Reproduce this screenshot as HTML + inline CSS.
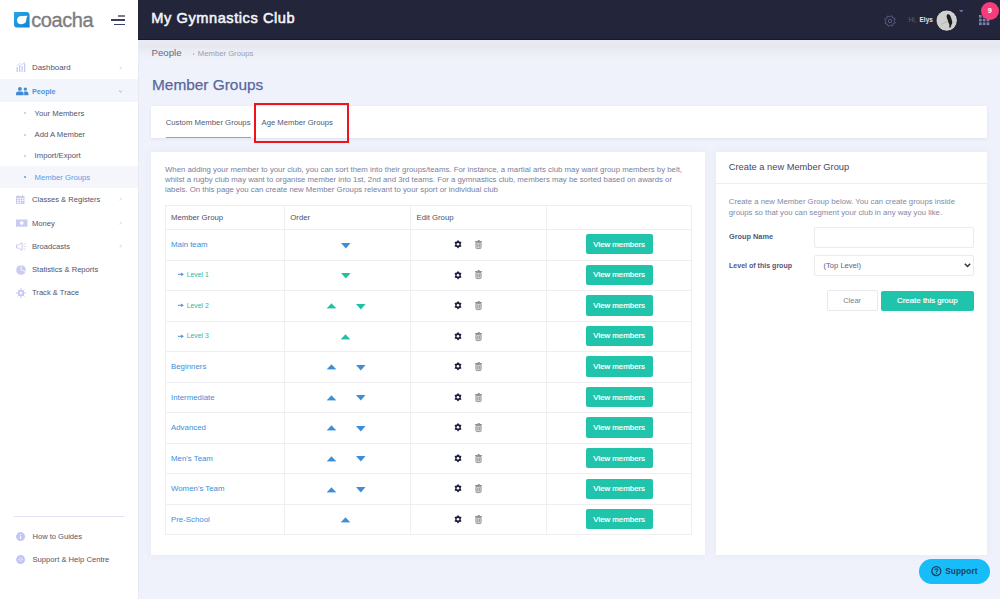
<!DOCTYPE html><html><head><meta charset="utf-8"><style>
*{margin:0;padding:0;box-sizing:border-box}
html,body{width:1000px;height:599px;overflow:hidden;background:#eff2fb;font-family:"Liberation Sans",sans-serif}
.t{position:absolute;white-space:nowrap;line-height:1}
.r{position:absolute}
svg{position:absolute;overflow:visible}
</style></head><body>
<div class="r" style="left:0px;top:0px;width:138px;height:599px;background:#ffffff;"></div>
<div class="r" style="left:138px;top:0px;width:1px;height:599px;background:#e9ebf3;"></div>
<svg style="left:14px;top:12.2px" width="16" height="16" viewBox="0 0 16 16"><defs><linearGradient id="lg" x1="0" y1="0" x2="1" y2="1"><stop offset="0" stop-color="#2ba3e6"/><stop offset="1" stop-color="#0b86d3"/></linearGradient></defs><path d="M0 0 H12.2 Q15.6 0 15.6 3.4 V15.6 H3.4 Q0 15.6 0 12.2 Z" fill="url(#lg)"/><path d="M3 8.6 Q3 4.1 7.6 4 L13.7 3.7 Q12.4 5 12.3 7.6 Q12.1 12.2 7.5 12.3 Q3 12.3 3 8.6 Z" fill="#ffffff"/></svg>
<div class="t" style="left:31.3px;top:10.2px;font-size:20px;color:#7d7d7f;letter-spacing:-0.45px;-webkit-text-stroke:0.35px #7d7d7f">coacha</div>
<div class="r" style="left:118.3px;top:15.2px;width:6.700000000000003px;height:1.6000000000000014px;background:#7a7c8c;"></div>
<div class="r" style="left:111.2px;top:19.3px;width:13.799999999999997px;height:1.6999999999999993px;background:#3a3f5e;"></div>
<div class="r" style="left:114.2px;top:23.9px;width:10.799999999999997px;height:1.2000000000000028px;background:#3c4060;"></div>
<svg style="left:16px;top:62px" width="11" height="10" viewBox="0 0 11 10"><g fill="#c9cbf3"><rect x="0.5" y="5" width="1.3" height="5"/><rect x="3" y="3" width="1.3" height="7"/><rect x="5.5" y="4" width="1.3" height="6"/><rect x="8" y="1.5" width="1.3" height="8.5"/></g><path d="M0.5 4 L3.5 1.5 L6 2.5 L9 0.3" stroke="#c9cbf3" stroke-width="0.7" fill="none"/></svg>
<div class="t" style="left:32.00px;top:63.95px;font-size:7.9px;color:#50546c;">Dashboard</div>
<svg style="left:119px;top:64.5px" width="4" height="6" viewBox="0 0 4 6"><path d="M0.9 1.5 L2.4 3 L0.9 4.5" fill="none" stroke="#ccd0ea" stroke-width="0.9"/></svg>
<div class="r" style="left:0px;top:79px;width:138px;height:23px;background:#f3f5fc;"></div>
<svg style="left:16px;top:87px" width="13" height="8.5" viewBox="0 0 13 8.5"><g fill="#3d8ad6"><circle cx="3.9" cy="1.9" r="1.9"/><path d="M0 8.3 V6.6 Q0 4.4 2.4 4.4 H5.4 Q7.6 4.4 7.6 6.6 V8.3 Z"/><circle cx="9.3" cy="2.1" r="1.65"/><path d="M8.2 8.3 V4.6 H10.4 Q12.4 4.6 12.4 6.7 V8.3 Z"/></g></svg>
<div class="t" style="left:32.00px;top:87.76px;font-size:7.2px;color:#4b94dc;font-weight:700;">People</div>
<svg style="left:118px;top:90px" width="5" height="3" viewBox="0 0 5 3"><path d="M1.2 0.8 L2.5 2 L3.8 0.8" fill="none" stroke="#6f93c9" stroke-width="0.8"/></svg>
<div class="r" style="left:24px;top:112.2px;width:2px;height:2px;border-radius:50%;background:#c0c6e4"></div>
<div class="t" style="left:34.60px;top:109.53px;font-size:7.7px;color:#50546c;">Your Members</div>
<div class="r" style="left:24px;top:133.5px;width:2px;height:2px;border-radius:50%;background:#c0c6e4"></div>
<div class="t" style="left:34.60px;top:130.84px;font-size:7.7px;color:#50546c;">Add A Member</div>
<div class="r" style="left:24px;top:154.8px;width:2px;height:2px;border-radius:50%;background:#c0c6e4"></div>
<div class="t" style="left:34.60px;top:152.13px;font-size:7.7px;color:#50546c;">Import/Export</div>
<div class="r" style="left:0px;top:165.5px;width:138px;height:22.5px;background:#f5f6fb;"></div>
<div class="r" style="left:24px;top:176.2px;width:2px;height:2px;border-radius:50%;background:#5b9be0"></div>
<div class="t" style="left:34.60px;top:173.53px;font-size:7.7px;color:#5b9be0;">Member Groups</div>
<div class="t" style="left:32.00px;top:195.68px;font-size:7.6px;color:#50546c;">Classes & Registers</div>
<svg style="left:119px;top:196.1px" width="4" height="6" viewBox="0 0 4 6"><path d="M0.9 1.5 L2.4 3 L0.9 4.5" fill="none" stroke="#ccd0ea" stroke-width="0.9"/></svg>
<div class="t" style="left:32.00px;top:219.58px;font-size:7.6px;color:#50546c;">Money</div>
<svg style="left:119px;top:220px" width="4" height="6" viewBox="0 0 4 6"><path d="M0.9 1.5 L2.4 3 L0.9 4.5" fill="none" stroke="#ccd0ea" stroke-width="0.9"/></svg>
<div class="t" style="left:32.00px;top:242.78px;font-size:7.6px;color:#50546c;">Broadcasts</div>
<svg style="left:119px;top:243.2px" width="4" height="6" viewBox="0 0 4 6"><path d="M0.9 1.5 L2.4 3 L0.9 4.5" fill="none" stroke="#ccd0ea" stroke-width="0.9"/></svg>
<div class="t" style="left:32.00px;top:265.98px;font-size:7.6px;color:#50546c;">Statistics & Reports</div>
<div class="t" style="left:32.00px;top:288.98px;font-size:7.6px;color:#50546c;">Track & Trace</div>
<svg style="left:16px;top:195px" width="9" height="9" viewBox="0 0 9 9"><rect x="0" y="1" width="8.5" height="8" fill="#c9cbf3"/><g fill="#ffffff"><rect x="1.2" y="3" width="1.5" height="1.2"/><rect x="3.6" y="3" width="1.5" height="1.2"/><rect x="6" y="3" width="1.5" height="1.2"/><rect x="1.2" y="5" width="1.5" height="1.2"/><rect x="3.6" y="5" width="1.5" height="1.2"/><rect x="6" y="5" width="1.5" height="1.2"/><rect x="1.2" y="7" width="1.5" height="1.2"/><rect x="3.6" y="7" width="1.5" height="1.2"/></g><rect x="1.5" y="0" width="1" height="2" fill="#c9cbf3"/><rect x="6" y="0" width="1" height="2" fill="#c9cbf3"/></svg>
<svg style="left:16px;top:219px" width="12" height="8" viewBox="0 0 12 8"><rect x="0" y="0.5" width="11.5" height="7.2" fill="#c9cbf3"/><circle cx="5.7" cy="4.1" r="1.8" fill="#ffffff"/></svg>
<svg style="left:16px;top:242px" width="10" height="9" viewBox="0 0 10 9"><path d="M0.5 3 L2.5 3 L6 0.5 L6 8.5 L2.5 6 L0.5 6 Z" fill="none" stroke="#c9cbf3" stroke-width="1"/><path d="M7.5 2.5 L9.5 1.5 M7.5 4.5 L9.8 4.5 M7.5 6.5 L9.5 7.5" stroke="#c9cbf3" stroke-width="0.8"/></svg>
<svg style="left:16px;top:265px" width="10" height="10" viewBox="0 0 10 10"><circle cx="5" cy="5" r="4.8" fill="#c9cbf3"/><path d="M5 5 L5 0.2 M5 5 L9.5 6.5" stroke="#ffffff" stroke-width="0.8"/></svg>
<svg style="left:16px;top:288px" width="10" height="10" viewBox="0 0 10 10"><g stroke="#c9cbf3" stroke-width="1"><path d="M5 0 V10 M0 5 H10 M1.5 1.5 L8.5 8.5 M8.5 1.5 L1.5 8.5"/></g><circle cx="5" cy="5" r="3.2" fill="#c9cbf3"/><circle cx="5" cy="5" r="1.2" fill="#fff"/></svg>
<div class="r" style="left:14px;top:516px;width:110px;height:1px;background:#dfe3f5;"></div>
<svg style="left:16px;top:531.5px" width="10" height="10" viewBox="0 0 10 10"><circle cx="4.6" cy="4.6" r="4.5" fill="#c3c6f4"/><rect x="4.1" y="2" width="1" height="1" fill="#fff"/><rect x="4.1" y="3.7" width="1" height="3.5" fill="#fff"/></svg>
<div class="t" style="left:32.50px;top:532.90px;font-size:7.55px;color:#50546c;">How to Guides</div>
<svg style="left:16px;top:555px" width="10" height="10" viewBox="0 0 10 10"><circle cx="4.6" cy="4.6" r="4.5" fill="#c3c6f4"/><circle cx="4.6" cy="4.6" r="2" fill="#fff"/><path d="M1.5 1.5 L7.7 7.7 M7.7 1.5 L1.5 7.7" stroke="#c3c6f4" stroke-width="1.2"/></svg>
<div class="t" style="left:32.50px;top:556.06px;font-size:7.65px;color:#50546c;">Support &amp; Help Centre</div>
<div class="r" style="left:138px;top:0px;width:862px;height:40px;background:#23263a;"></div>
<div class="r" style="left:138px;top:39px;width:862px;height:1px;background:#171a2b;"></div>
<div class="r" style="left:138px;top:40px;width:862px;height:18px;background:linear-gradient(#eaebf2 0%,#e6e7ef 35%,#ebedf5 60%,#eff1f9 100%);"></div>
<div class="t" style="left:151.30px;top:11.03px;font-size:14.6px;color:#f4f4f8;letter-spacing:0.56px;-webkit-text-stroke:0.55px #f4f4f8">My Gymnastics Club</div>
<svg style="left:883.5px;top:14.5px" width="12" height="12" viewBox="0 0 12 12"><path d="M11.29 7.07 L10.98 8.08 L9.48 8.35 L8.96 8.98 L8.98 10.50 L8.05 11.00 L6.80 10.12 L5.98 10.20 L4.93 11.29 L3.92 10.98 L3.65 9.48 L3.02 8.96 L1.50 8.98 L1.00 8.05 L1.88 6.80 L1.80 5.98 L0.71 4.93 L1.02 3.92 L2.52 3.65 L3.04 3.02 L3.02 1.50 L3.95 1.00 L5.20 1.88 L6.02 1.80 L7.07 0.71 L8.08 1.02 L8.35 2.52 L8.98 3.04 L10.50 3.02 L11.00 3.95 L10.12 5.20 L10.20 6.02Z" fill="none" stroke="#60658f" stroke-width="0.85" stroke-linejoin="round"/><circle cx="6" cy="6" r="1.7" fill="none" stroke="#60658f" stroke-width="0.85"/></svg>
<div class="t" style="left:908.50px;top:17.27px;font-size:6.5px;color:#60647c;">Hi,</div>
<div class="t" style="left:919.60px;top:17.32px;font-size:6.4px;color:#e4e5ec;font-weight:700;">Elys</div>
<svg style="left:936px;top:9.5px" width="22" height="22" viewBox="0 0 22 22"><circle cx="10.7" cy="10.6" r="10.4" fill="#d9d9d7"/><circle cx="10.7" cy="10.6" r="9.6" fill="#cfcfcd"/><path d="M11.5 4.3 Q13.6 3.9 14.4 6 Q15.6 9 16.2 11.5 Q16.6 13.5 15.3 15 L14.6 17.5 L13.4 17.8 L13.3 14.2 Q12 12 11.8 10.2 Q10.8 8.4 10.6 6.6 Q10.7 4.8 11.5 4.3 Z" fill="#1e1e1e"/><path d="M5 14.5 L11.5 11.5" stroke="#9a9a9a" stroke-width="0.5"/><circle cx="10.7" cy="10.6" r="10.6" fill="none" stroke="#15172a" stroke-width="0.6"/></svg>
<svg style="left:958.8px;top:10px" width="5" height="3" viewBox="0 0 5 3"><path d="M0 0 L4.6 0 L2.3 2.3Z" fill="#7177ad"/></svg>
<svg style="left:979px;top:15px" width="12" height="11" viewBox="0 0 12 11"><g fill="#7c82ad"><rect x="0.0" y="0.0" width="2.7" height="2.7"/><rect x="0.0" y="3.7" width="2.7" height="2.7"/><rect x="0.0" y="7.4" width="2.7" height="2.7"/><rect x="3.8" y="0.0" width="2.7" height="2.7"/><rect x="3.8" y="3.7" width="2.7" height="2.7"/><rect x="3.8" y="7.4" width="2.7" height="2.7"/><rect x="7.6" y="0.0" width="2.7" height="2.7"/><rect x="7.6" y="3.7" width="2.7" height="2.7"/><rect x="7.6" y="7.4" width="2.7" height="2.7"/></g></svg>
<div class="r" style="left:981px;top:2px;width:18px;height:18px;border-radius:50%;background:#f83c7b"></div>
<div class="t" style="left:987.70px;top:7.02px;font-size:7.3px;color:#ffffff;font-weight:700;">9</div>
<div class="t" style="left:151.50px;top:47.93px;font-size:9.7px;color:#646a80;">People</div>
<div class="r" style="left:192.6px;top:53.2px;width:1.4000000000000057px;height:1.3999999999999986px;background:#a6a9bf;border-radius:1px"></div>
<div class="t" style="left:197.80px;top:50.13px;font-size:7.7px;color:#999db3;">Member Groups</div>
<div class="t" style="left:152.00px;top:77.47px;font-size:15.4px;color:#59669a;-webkit-text-stroke:0.25px #59669a">Member Groups</div>
<div class="r" style="left:151px;top:106px;width:836px;height:31.5px;background:#ffffff;box-shadow:0 1px 3px rgba(60,50,90,0.07)"></div>
<div class="t" style="left:165.70px;top:119.01px;font-size:7.75px;color:#535873;">Custom Member Groups</div>
<div class="r" style="left:166px;top:136.5px;width:85px;height:1.5px;background:#6fb1df;"></div>
<div class="t" style="left:261.50px;top:119.03px;font-size:7.7px;color:#535873;">Age Member Groups</div>
<div class="r" style="left:254.1px;top:103px;width:94.8px;height:40.2px;border:2.2px solid #f0131b"></div>
<div class="r" style="left:151px;top:152px;width:554px;height:403px;background:#ffffff;box-shadow:0 0 8px rgba(82,63,105,0.05)"></div>
<div class="t" style="left:165.00px;top:165.99px;font-size:7.8px;color:#7b809c;">When adding your member to your club, you can sort them into their groups/teams. For instance, a martial arts club may want group members by belt,</div>
<div class="t" style="left:165.00px;top:175.89px;font-size:7.8px;color:#7b809c;">whilst a rugby club may want to organise member into 1st, 2nd and 3rd teams. For a gymnastics club, members may be sorted based on awards or</div>
<div class="t" style="left:165.00px;top:186.39px;font-size:7.8px;color:#7b809c;">labels. On this page you can create new Member Groups relevant to your sport or individual club</div>
<div class="r" style="left:165px;top:205px;width:527px;height:1px;background:#eeeef3;"></div>
<div class="r" style="left:165px;top:229px;width:527px;height:1px;background:#eeeef3;"></div>
<div class="r" style="left:165px;top:260px;width:527px;height:1px;background:#eeeef3;"></div>
<div class="r" style="left:165px;top:290px;width:527px;height:1px;background:#eeeef3;"></div>
<div class="r" style="left:165px;top:321px;width:527px;height:1px;background:#eeeef3;"></div>
<div class="r" style="left:165px;top:351px;width:527px;height:1px;background:#eeeef3;"></div>
<div class="r" style="left:165px;top:382px;width:527px;height:1px;background:#eeeef3;"></div>
<div class="r" style="left:165px;top:412px;width:527px;height:1px;background:#eeeef3;"></div>
<div class="r" style="left:165px;top:443px;width:527px;height:1px;background:#eeeef3;"></div>
<div class="r" style="left:165px;top:473px;width:527px;height:1px;background:#eeeef3;"></div>
<div class="r" style="left:165px;top:504px;width:527px;height:1px;background:#eeeef3;"></div>
<div class="r" style="left:165px;top:534px;width:527px;height:1px;background:#eeeef3;"></div>
<div class="r" style="left:165px;top:205px;width:1px;height:330px;background:#eeeef3;"></div>
<div class="r" style="left:284px;top:205px;width:1px;height:330px;background:#eeeef3;"></div>
<div class="r" style="left:410px;top:205px;width:1px;height:330px;background:#eeeef3;"></div>
<div class="r" style="left:546px;top:205px;width:1px;height:330px;background:#eeeef3;"></div>
<div class="r" style="left:691px;top:205px;width:1px;height:330px;background:#eeeef3;"></div>
<div class="t" style="left:171.00px;top:213.51px;font-size:7.75px;color:#4a4f6a;">Member Group</div>
<div class="t" style="left:290.30px;top:213.51px;font-size:7.75px;color:#4a4f6a;">Order</div>
<div class="t" style="left:416.50px;top:213.51px;font-size:7.75px;color:#4a4f6a;">Edit Group</div>
<div class="t" style="left:171.00px;top:240.77px;font-size:7.85px;color:#3d8ed8;">Main team</div>
<svg style="left:341.20px;top:242.50px" width="9.6" height="5.6" viewBox="0 0 9.6 5.6"><path d="M0 0 L9.6 0 L4.8 5.4 Z" fill="#3d8ed8"/></svg>
<svg style="left:454px;top:240.00px" width="8" height="8.5" viewBox="0 0 8 8.5"><path d="M4 0 L5.3 1.6 L7.5 1.9 L6.6 4.25 L7.5 6.6 L5.3 6.9 L4 8.5 L2.7 6.9 L0.5 6.6 L1.4 4.25 L0.5 1.9 L2.7 1.6 Z" fill="#1c1f3e"/><circle cx="4" cy="4.25" r="1.3" fill="#ffffff"/></svg>
<svg style="left:475px;top:239.90px" width="7.5" height="9" viewBox="0 0 7.5 9"><path d="M2.4 0.9 Q2.6 0 3.75 0 Q4.9 0 5.1 0.9 Z" fill="#8f9096"/><rect x="0" y="0.9" width="7" height="1.1" rx="0.4" fill="#8f9096"/><path d="M0.9 2.5 H6.1 V7.5 Q6.1 8.6 5 8.6 H2 Q0.9 8.6 0.9 7.5 Z" fill="#d6d6da" stroke="#8f9096" stroke-width="0.9"/><rect x="2.4" y="3.7" width="0.8" height="3.6" fill="#8f9096"/><rect x="3.9" y="3.7" width="0.8" height="3.6" fill="#8f9096"/></svg>
<div class="r" style="left:586px;top:234.10px;width:66.5px;height:20.4px;background:#1fc4aa;border-radius:2px"></div>
<div class="t" style="left:593.30px;top:240.77px;font-size:7.85px;color:#ffffff;-webkit-text-stroke:0.2px #ffffff">View members</div>
<svg style="left:178.2px;top:272.40px" width="6" height="4.6" viewBox="0 0 6 4.6"><path d="M0 2.3 H3.6" stroke="#4a8fd3" stroke-width="1"/><path d="M3.1 0.4 L5.8 2.3 L3.1 4.2 Z" fill="#4a8fd3"/></svg>
<div class="t" style="left:186.80px;top:272.19px;font-size:6.8px;color:#2db89f;">Level 1</div>
<svg style="left:341.20px;top:273.05px" width="9.6" height="5.6" viewBox="0 0 9.6 5.6"><path d="M0 0 L9.6 0 L4.8 5.4 Z" fill="#22bfa2"/></svg>
<svg style="left:454px;top:270.55px" width="8" height="8.5" viewBox="0 0 8 8.5"><path d="M4 0 L5.3 1.6 L7.5 1.9 L6.6 4.25 L7.5 6.6 L5.3 6.9 L4 8.5 L2.7 6.9 L0.5 6.6 L1.4 4.25 L0.5 1.9 L2.7 1.6 Z" fill="#1c1f3e"/><circle cx="4" cy="4.25" r="1.3" fill="#ffffff"/></svg>
<svg style="left:475px;top:270.45px" width="7.5" height="9" viewBox="0 0 7.5 9"><path d="M2.4 0.9 Q2.6 0 3.75 0 Q4.9 0 5.1 0.9 Z" fill="#8f9096"/><rect x="0" y="0.9" width="7" height="1.1" rx="0.4" fill="#8f9096"/><path d="M0.9 2.5 H6.1 V7.5 Q6.1 8.6 5 8.6 H2 Q0.9 8.6 0.9 7.5 Z" fill="#d6d6da" stroke="#8f9096" stroke-width="0.9"/><rect x="2.4" y="3.7" width="0.8" height="3.6" fill="#8f9096"/><rect x="3.9" y="3.7" width="0.8" height="3.6" fill="#8f9096"/></svg>
<div class="r" style="left:586px;top:264.65px;width:66.5px;height:20.4px;background:#1fc4aa;border-radius:2px"></div>
<div class="t" style="left:593.30px;top:271.32px;font-size:7.85px;color:#ffffff;-webkit-text-stroke:0.2px #ffffff">View members</div>
<svg style="left:178.2px;top:302.95px" width="6" height="4.6" viewBox="0 0 6 4.6"><path d="M0 2.3 H3.6" stroke="#4a8fd3" stroke-width="1"/><path d="M3.1 0.4 L5.8 2.3 L3.1 4.2 Z" fill="#4a8fd3"/></svg>
<div class="t" style="left:186.80px;top:302.74px;font-size:6.8px;color:#2db89f;">Level 2</div>
<svg style="left:327.20px;top:303.20px" width="9" height="5.2" viewBox="0 0 9 5.2"><path d="M0 5.2 L4.5 0.4 L9 5.2 Z" fill="#22bfa2" stroke="#22bfa2" stroke-width="0.3" stroke-linejoin="round"/></svg>
<svg style="left:355.70px;top:303.60px" width="9.6" height="5.6" viewBox="0 0 9.6 5.6"><path d="M0 0 L9.6 0 L4.8 5.4 Z" fill="#22bfa2"/></svg>
<svg style="left:454px;top:301.10px" width="8" height="8.5" viewBox="0 0 8 8.5"><path d="M4 0 L5.3 1.6 L7.5 1.9 L6.6 4.25 L7.5 6.6 L5.3 6.9 L4 8.5 L2.7 6.9 L0.5 6.6 L1.4 4.25 L0.5 1.9 L2.7 1.6 Z" fill="#1c1f3e"/><circle cx="4" cy="4.25" r="1.3" fill="#ffffff"/></svg>
<svg style="left:475px;top:301.00px" width="7.5" height="9" viewBox="0 0 7.5 9"><path d="M2.4 0.9 Q2.6 0 3.75 0 Q4.9 0 5.1 0.9 Z" fill="#8f9096"/><rect x="0" y="0.9" width="7" height="1.1" rx="0.4" fill="#8f9096"/><path d="M0.9 2.5 H6.1 V7.5 Q6.1 8.6 5 8.6 H2 Q0.9 8.6 0.9 7.5 Z" fill="#d6d6da" stroke="#8f9096" stroke-width="0.9"/><rect x="2.4" y="3.7" width="0.8" height="3.6" fill="#8f9096"/><rect x="3.9" y="3.7" width="0.8" height="3.6" fill="#8f9096"/></svg>
<div class="r" style="left:586px;top:295.20px;width:66.5px;height:20.4px;background:#1fc4aa;border-radius:2px"></div>
<div class="t" style="left:593.30px;top:301.87px;font-size:7.85px;color:#ffffff;-webkit-text-stroke:0.2px #ffffff">View members</div>
<svg style="left:178.2px;top:333.50px" width="6" height="4.6" viewBox="0 0 6 4.6"><path d="M0 2.3 H3.6" stroke="#4a8fd3" stroke-width="1"/><path d="M3.1 0.4 L5.8 2.3 L3.1 4.2 Z" fill="#4a8fd3"/></svg>
<div class="t" style="left:186.80px;top:333.29px;font-size:6.8px;color:#2db89f;">Level 3</div>
<svg style="left:341.20px;top:333.75px" width="9" height="5.2" viewBox="0 0 9 5.2"><path d="M0 5.2 L4.5 0.4 L9 5.2 Z" fill="#22bfa2" stroke="#22bfa2" stroke-width="0.3" stroke-linejoin="round"/></svg>
<svg style="left:454px;top:331.65px" width="8" height="8.5" viewBox="0 0 8 8.5"><path d="M4 0 L5.3 1.6 L7.5 1.9 L6.6 4.25 L7.5 6.6 L5.3 6.9 L4 8.5 L2.7 6.9 L0.5 6.6 L1.4 4.25 L0.5 1.9 L2.7 1.6 Z" fill="#1c1f3e"/><circle cx="4" cy="4.25" r="1.3" fill="#ffffff"/></svg>
<svg style="left:475px;top:331.55px" width="7.5" height="9" viewBox="0 0 7.5 9"><path d="M2.4 0.9 Q2.6 0 3.75 0 Q4.9 0 5.1 0.9 Z" fill="#8f9096"/><rect x="0" y="0.9" width="7" height="1.1" rx="0.4" fill="#8f9096"/><path d="M0.9 2.5 H6.1 V7.5 Q6.1 8.6 5 8.6 H2 Q0.9 8.6 0.9 7.5 Z" fill="#d6d6da" stroke="#8f9096" stroke-width="0.9"/><rect x="2.4" y="3.7" width="0.8" height="3.6" fill="#8f9096"/><rect x="3.9" y="3.7" width="0.8" height="3.6" fill="#8f9096"/></svg>
<div class="r" style="left:586px;top:325.75px;width:66.5px;height:20.4px;background:#1fc4aa;border-radius:2px"></div>
<div class="t" style="left:593.30px;top:332.42px;font-size:7.85px;color:#ffffff;-webkit-text-stroke:0.2px #ffffff">View members</div>
<div class="t" style="left:171.00px;top:362.97px;font-size:7.85px;color:#3d8ed8;">Beginners</div>
<svg style="left:327.20px;top:364.30px" width="9" height="5.2" viewBox="0 0 9 5.2"><path d="M0 5.2 L4.5 0.4 L9 5.2 Z" fill="#3d8ed8" stroke="#3d8ed8" stroke-width="0.3" stroke-linejoin="round"/></svg>
<svg style="left:355.70px;top:364.70px" width="9.6" height="5.6" viewBox="0 0 9.6 5.6"><path d="M0 0 L9.6 0 L4.8 5.4 Z" fill="#3d8ed8"/></svg>
<svg style="left:454px;top:362.20px" width="8" height="8.5" viewBox="0 0 8 8.5"><path d="M4 0 L5.3 1.6 L7.5 1.9 L6.6 4.25 L7.5 6.6 L5.3 6.9 L4 8.5 L2.7 6.9 L0.5 6.6 L1.4 4.25 L0.5 1.9 L2.7 1.6 Z" fill="#1c1f3e"/><circle cx="4" cy="4.25" r="1.3" fill="#ffffff"/></svg>
<svg style="left:475px;top:362.10px" width="7.5" height="9" viewBox="0 0 7.5 9"><path d="M2.4 0.9 Q2.6 0 3.75 0 Q4.9 0 5.1 0.9 Z" fill="#8f9096"/><rect x="0" y="0.9" width="7" height="1.1" rx="0.4" fill="#8f9096"/><path d="M0.9 2.5 H6.1 V7.5 Q6.1 8.6 5 8.6 H2 Q0.9 8.6 0.9 7.5 Z" fill="#d6d6da" stroke="#8f9096" stroke-width="0.9"/><rect x="2.4" y="3.7" width="0.8" height="3.6" fill="#8f9096"/><rect x="3.9" y="3.7" width="0.8" height="3.6" fill="#8f9096"/></svg>
<div class="r" style="left:586px;top:356.30px;width:66.5px;height:20.4px;background:#1fc4aa;border-radius:2px"></div>
<div class="t" style="left:593.30px;top:362.97px;font-size:7.85px;color:#ffffff;-webkit-text-stroke:0.2px #ffffff">View members</div>
<div class="t" style="left:171.00px;top:393.52px;font-size:7.85px;color:#3d8ed8;">Intermediate</div>
<svg style="left:327.20px;top:394.85px" width="9" height="5.2" viewBox="0 0 9 5.2"><path d="M0 5.2 L4.5 0.4 L9 5.2 Z" fill="#3d8ed8" stroke="#3d8ed8" stroke-width="0.3" stroke-linejoin="round"/></svg>
<svg style="left:355.70px;top:395.25px" width="9.6" height="5.6" viewBox="0 0 9.6 5.6"><path d="M0 0 L9.6 0 L4.8 5.4 Z" fill="#3d8ed8"/></svg>
<svg style="left:454px;top:392.75px" width="8" height="8.5" viewBox="0 0 8 8.5"><path d="M4 0 L5.3 1.6 L7.5 1.9 L6.6 4.25 L7.5 6.6 L5.3 6.9 L4 8.5 L2.7 6.9 L0.5 6.6 L1.4 4.25 L0.5 1.9 L2.7 1.6 Z" fill="#1c1f3e"/><circle cx="4" cy="4.25" r="1.3" fill="#ffffff"/></svg>
<svg style="left:475px;top:392.65px" width="7.5" height="9" viewBox="0 0 7.5 9"><path d="M2.4 0.9 Q2.6 0 3.75 0 Q4.9 0 5.1 0.9 Z" fill="#8f9096"/><rect x="0" y="0.9" width="7" height="1.1" rx="0.4" fill="#8f9096"/><path d="M0.9 2.5 H6.1 V7.5 Q6.1 8.6 5 8.6 H2 Q0.9 8.6 0.9 7.5 Z" fill="#d6d6da" stroke="#8f9096" stroke-width="0.9"/><rect x="2.4" y="3.7" width="0.8" height="3.6" fill="#8f9096"/><rect x="3.9" y="3.7" width="0.8" height="3.6" fill="#8f9096"/></svg>
<div class="r" style="left:586px;top:386.85px;width:66.5px;height:20.4px;background:#1fc4aa;border-radius:2px"></div>
<div class="t" style="left:593.30px;top:393.52px;font-size:7.85px;color:#ffffff;-webkit-text-stroke:0.2px #ffffff">View members</div>
<div class="t" style="left:171.00px;top:424.07px;font-size:7.85px;color:#3d8ed8;">Advanced</div>
<svg style="left:327.20px;top:425.40px" width="9" height="5.2" viewBox="0 0 9 5.2"><path d="M0 5.2 L4.5 0.4 L9 5.2 Z" fill="#3d8ed8" stroke="#3d8ed8" stroke-width="0.3" stroke-linejoin="round"/></svg>
<svg style="left:355.70px;top:425.80px" width="9.6" height="5.6" viewBox="0 0 9.6 5.6"><path d="M0 0 L9.6 0 L4.8 5.4 Z" fill="#3d8ed8"/></svg>
<svg style="left:454px;top:423.30px" width="8" height="8.5" viewBox="0 0 8 8.5"><path d="M4 0 L5.3 1.6 L7.5 1.9 L6.6 4.25 L7.5 6.6 L5.3 6.9 L4 8.5 L2.7 6.9 L0.5 6.6 L1.4 4.25 L0.5 1.9 L2.7 1.6 Z" fill="#1c1f3e"/><circle cx="4" cy="4.25" r="1.3" fill="#ffffff"/></svg>
<svg style="left:475px;top:423.20px" width="7.5" height="9" viewBox="0 0 7.5 9"><path d="M2.4 0.9 Q2.6 0 3.75 0 Q4.9 0 5.1 0.9 Z" fill="#8f9096"/><rect x="0" y="0.9" width="7" height="1.1" rx="0.4" fill="#8f9096"/><path d="M0.9 2.5 H6.1 V7.5 Q6.1 8.6 5 8.6 H2 Q0.9 8.6 0.9 7.5 Z" fill="#d6d6da" stroke="#8f9096" stroke-width="0.9"/><rect x="2.4" y="3.7" width="0.8" height="3.6" fill="#8f9096"/><rect x="3.9" y="3.7" width="0.8" height="3.6" fill="#8f9096"/></svg>
<div class="r" style="left:586px;top:417.40px;width:66.5px;height:20.4px;background:#1fc4aa;border-radius:2px"></div>
<div class="t" style="left:593.30px;top:424.07px;font-size:7.85px;color:#ffffff;-webkit-text-stroke:0.2px #ffffff">View members</div>
<div class="t" style="left:171.00px;top:454.62px;font-size:7.85px;color:#3d8ed8;">Men's Team</div>
<svg style="left:327.20px;top:455.95px" width="9" height="5.2" viewBox="0 0 9 5.2"><path d="M0 5.2 L4.5 0.4 L9 5.2 Z" fill="#3d8ed8" stroke="#3d8ed8" stroke-width="0.3" stroke-linejoin="round"/></svg>
<svg style="left:355.70px;top:456.35px" width="9.6" height="5.6" viewBox="0 0 9.6 5.6"><path d="M0 0 L9.6 0 L4.8 5.4 Z" fill="#3d8ed8"/></svg>
<svg style="left:454px;top:453.85px" width="8" height="8.5" viewBox="0 0 8 8.5"><path d="M4 0 L5.3 1.6 L7.5 1.9 L6.6 4.25 L7.5 6.6 L5.3 6.9 L4 8.5 L2.7 6.9 L0.5 6.6 L1.4 4.25 L0.5 1.9 L2.7 1.6 Z" fill="#1c1f3e"/><circle cx="4" cy="4.25" r="1.3" fill="#ffffff"/></svg>
<svg style="left:475px;top:453.75px" width="7.5" height="9" viewBox="0 0 7.5 9"><path d="M2.4 0.9 Q2.6 0 3.75 0 Q4.9 0 5.1 0.9 Z" fill="#8f9096"/><rect x="0" y="0.9" width="7" height="1.1" rx="0.4" fill="#8f9096"/><path d="M0.9 2.5 H6.1 V7.5 Q6.1 8.6 5 8.6 H2 Q0.9 8.6 0.9 7.5 Z" fill="#d6d6da" stroke="#8f9096" stroke-width="0.9"/><rect x="2.4" y="3.7" width="0.8" height="3.6" fill="#8f9096"/><rect x="3.9" y="3.7" width="0.8" height="3.6" fill="#8f9096"/></svg>
<div class="r" style="left:586px;top:447.95px;width:66.5px;height:20.4px;background:#1fc4aa;border-radius:2px"></div>
<div class="t" style="left:593.30px;top:454.62px;font-size:7.85px;color:#ffffff;-webkit-text-stroke:0.2px #ffffff">View members</div>
<div class="t" style="left:171.00px;top:485.17px;font-size:7.85px;color:#3d8ed8;">Women's Team</div>
<svg style="left:327.20px;top:486.50px" width="9" height="5.2" viewBox="0 0 9 5.2"><path d="M0 5.2 L4.5 0.4 L9 5.2 Z" fill="#3d8ed8" stroke="#3d8ed8" stroke-width="0.3" stroke-linejoin="round"/></svg>
<svg style="left:355.70px;top:486.90px" width="9.6" height="5.6" viewBox="0 0 9.6 5.6"><path d="M0 0 L9.6 0 L4.8 5.4 Z" fill="#3d8ed8"/></svg>
<svg style="left:454px;top:484.40px" width="8" height="8.5" viewBox="0 0 8 8.5"><path d="M4 0 L5.3 1.6 L7.5 1.9 L6.6 4.25 L7.5 6.6 L5.3 6.9 L4 8.5 L2.7 6.9 L0.5 6.6 L1.4 4.25 L0.5 1.9 L2.7 1.6 Z" fill="#1c1f3e"/><circle cx="4" cy="4.25" r="1.3" fill="#ffffff"/></svg>
<svg style="left:475px;top:484.30px" width="7.5" height="9" viewBox="0 0 7.5 9"><path d="M2.4 0.9 Q2.6 0 3.75 0 Q4.9 0 5.1 0.9 Z" fill="#8f9096"/><rect x="0" y="0.9" width="7" height="1.1" rx="0.4" fill="#8f9096"/><path d="M0.9 2.5 H6.1 V7.5 Q6.1 8.6 5 8.6 H2 Q0.9 8.6 0.9 7.5 Z" fill="#d6d6da" stroke="#8f9096" stroke-width="0.9"/><rect x="2.4" y="3.7" width="0.8" height="3.6" fill="#8f9096"/><rect x="3.9" y="3.7" width="0.8" height="3.6" fill="#8f9096"/></svg>
<div class="r" style="left:586px;top:478.50px;width:66.5px;height:20.4px;background:#1fc4aa;border-radius:2px"></div>
<div class="t" style="left:593.30px;top:485.17px;font-size:7.85px;color:#ffffff;-webkit-text-stroke:0.2px #ffffff">View members</div>
<div class="t" style="left:171.00px;top:515.72px;font-size:7.85px;color:#3d8ed8;">Pre-School</div>
<svg style="left:341.20px;top:517.05px" width="9" height="5.2" viewBox="0 0 9 5.2"><path d="M0 5.2 L4.5 0.4 L9 5.2 Z" fill="#3d8ed8" stroke="#3d8ed8" stroke-width="0.3" stroke-linejoin="round"/></svg>
<svg style="left:454px;top:514.95px" width="8" height="8.5" viewBox="0 0 8 8.5"><path d="M4 0 L5.3 1.6 L7.5 1.9 L6.6 4.25 L7.5 6.6 L5.3 6.9 L4 8.5 L2.7 6.9 L0.5 6.6 L1.4 4.25 L0.5 1.9 L2.7 1.6 Z" fill="#1c1f3e"/><circle cx="4" cy="4.25" r="1.3" fill="#ffffff"/></svg>
<svg style="left:475px;top:514.85px" width="7.5" height="9" viewBox="0 0 7.5 9"><path d="M2.4 0.9 Q2.6 0 3.75 0 Q4.9 0 5.1 0.9 Z" fill="#8f9096"/><rect x="0" y="0.9" width="7" height="1.1" rx="0.4" fill="#8f9096"/><path d="M0.9 2.5 H6.1 V7.5 Q6.1 8.6 5 8.6 H2 Q0.9 8.6 0.9 7.5 Z" fill="#d6d6da" stroke="#8f9096" stroke-width="0.9"/><rect x="2.4" y="3.7" width="0.8" height="3.6" fill="#8f9096"/><rect x="3.9" y="3.7" width="0.8" height="3.6" fill="#8f9096"/></svg>
<div class="r" style="left:586px;top:509.05px;width:66.5px;height:20.4px;background:#1fc4aa;border-radius:2px"></div>
<div class="t" style="left:593.30px;top:515.72px;font-size:7.85px;color:#ffffff;-webkit-text-stroke:0.2px #ffffff">View members</div>
<div class="r" style="left:716px;top:152px;width:271px;height:403px;background:#ffffff;box-shadow:0 0 8px rgba(82,63,105,0.05)"></div>
<div class="r" style="left:716px;top:183px;width:271px;height:1px;background:#eceef4;"></div>
<div class="t" style="left:728.80px;top:162.62px;font-size:9.3px;color:#434862;">Create a new Member Group</div>
<div class="t" style="left:728.80px;top:198.01px;font-size:7.75px;color:#8289a6;">Create a new Member Group below. You can create groups inside</div>
<div class="t" style="left:728.80px;top:208.81px;font-size:7.75px;color:#8289a6;">groups so that you can segment your club in any way you like.</div>
<div class="t" style="left:729.00px;top:233.49px;font-size:7.35px;color:#51577e;font-weight:700;">Group Name</div>
<div class="r" style="left:814px;top:227px;width:159.5px;height:20.5px;border:1px solid #eaebf0;border-radius:2px;background:#fff"></div>
<div class="t" style="left:729.00px;top:262.23px;font-size:7.05px;color:#51577e;font-weight:700;">Level of this group</div>
<div class="r" style="left:814px;top:255.3px;width:159.5px;height:20.5px;border:1px solid #eaebf0;border-radius:2px;background:#fff"></div>
<div class="t" style="left:823.50px;top:261.98px;font-size:7.6px;color:#5d6178;">(Top Level)</div>
<svg style="left:964px;top:263px" width="7" height="5" viewBox="0 0 7 5"><path d="M0.8 0.8 L3.5 3.6 L6.2 0.8" fill="none" stroke="#2a2d40" stroke-width="1.4"/></svg>
<div class="r" style="left:826.5px;top:290px;width:51px;height:21px;border:1px solid #e8e9ef;border-radius:2px;background:#fff"></div>
<div class="t" style="left:843.20px;top:297.12px;font-size:7.5px;color:#7c8094;">Clear</div>
<div class="r" style="left:881px;top:290.5px;width:92.5px;height:20.3px;background:#1fc4aa;border-radius:2px"></div>
<div class="t" style="left:897.00px;top:296.94px;font-size:7.9px;color:#ffffff;-webkit-text-stroke:0.2px #ffffff">Create this group</div>
<div class="r" style="left:919px;top:559px;width:71px;height:24.5px;border-radius:12.5px;background:#17bdf8"></div>
<svg style="left:930.5px;top:566px" width="11" height="11" viewBox="0 0 11 11"><circle cx="5.3" cy="5.1" r="4.5" fill="none" stroke="#183d5e" stroke-width="1.3"/><path d="M3.8 4.1 Q3.9 2.7 5.35 2.7 Q6.8 2.75 6.8 4 Q6.8 4.9 5.4 5.4 L5.4 6.2" fill="none" stroke="#183d5e" stroke-width="1.1"/><circle cx="5.4" cy="7.5" r="0.65" fill="#183d5e"/></svg>
<div class="t" style="left:945.20px;top:567.61px;font-size:8.2px;color:#1b3d5c;font-weight:700;letter-spacing:0.15px;">Support</div>
</body></html>
